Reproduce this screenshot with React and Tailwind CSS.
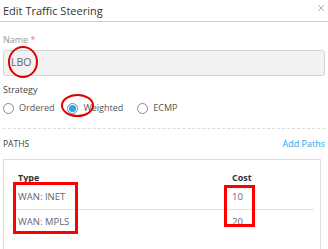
import React from 'react';

const rows = [
    { type: 'WAN: INET', cost: 10 },
    { type: 'WAN: MPLS', cost: 20 },
];

const Radio = ({ checked, label }) => (
    <label className="flex items-center gap-[5px]">
        {checked ? (
            <span className="w-[11px] h-[11px] rounded-full border border-[#2ea3e6] flex items-center justify-center bg-white">
                <span className="w-[7px] h-[7px] rounded-full bg-[#2ea3e6]" />
            </span>
        ) : (
            <span className="w-[11px] h-[11px] rounded-full border border-[#8a8a8a] bg-white" />
        )}
        <span>{label}</span>
    </label>
);

const App = () => {
    return (
        <div className="relative w-[328px] h-[249px] overflow-hidden bg-white text-[#444]" style={{ fontFamily: '"Open Sans", sans-serif' }}>
            <div className="h-[22px] flex items-center justify-between border-b border-[#cfcfcf] pl-[3px] pr-[3px]">
                <span className="text-[11px] text-[#333] leading-none">Edit Traffic Steering</span>
                <svg width="8" height="8" viewBox="0 0 8 8" className="mb-[6px]">
                    <path d="M1 1L7 7M7 1L1 7" stroke="#999" strokeWidth="0.8" />
                </svg>
            </div>

            <div className="px-[3px]">
                <div className="mt-[12px] text-[9px] leading-[12px] text-[#9a9a9a]">
                    Name <span className="text-[#ef7b7b]">*</span>
                </div>
                <div className="mt-[4px] h-[26px] w-[322px] rounded-[3px] border border-[#d4d4d4] bg-[#f2f2f2] flex items-center pl-[7px] text-[10.5px] text-[#666]">
                    LBO
                </div>

                <div className="mt-[8px] text-[9px] leading-[12px] text-[#444]">Strategy</div>
                <div className="mt-[6px] flex items-center text-[9px] leading-[12px] text-[#555]">
                    <div><Radio label="Ordered" /></div>
                    <div className="ml-[13px]"><Radio checked label="Weighted" /></div>
                    <div className="ml-[14px]"><Radio label="ECMP" /></div>
                </div>

                <div className="mt-[14px] border-t border-dashed border-[#dcdcdc]" />

                <div className="mt-[9px] flex items-center justify-between leading-[12px]">
                    <span className="text-[8.5px] text-[#444]">PATHS</span>
                    <span className="text-[9px] text-[#2ea3e6]">Add Paths</span>
                </div>

                <div className="mt-[9px] w-[318px] h-[120px] border border-[#dedede] pt-[11px] pl-[9px] pr-[6px]">
                    <div className="grid grid-cols-[214px_1fr] text-[9.5px]">
                        <div className="pl-[5px] leading-[14px] font-bold text-[#333] text-[9px]">Type</div>
                        <div className="pl-[5px] leading-[14px] font-bold text-[#333] text-[9px]">Cost</div>
                        {rows.map((row, i) => (
                            <React.Fragment key={i}>
                                <div className={`pl-[5px] h-[25px] flex items-center text-[#5f6570] ${i === 0 ? 'border-b border-[#e3e3e3]' : ''}`}>{row.type}</div>
                                <div className={`pl-[5px] h-[25px] flex items-center text-[#5f6570] ${i === 0 ? 'border-b border-[#e3e3e3]' : ''}`}>{row.cost}</div>
                            </React.Fragment>
                        ))}
                    </div>
                </div>
            </div>

            {/* red annotation marks */}
            <div className="absolute left-[8px] top-[46px] w-[30px] h-[32px] rounded-[50%] border-2 border-[#e00000]" />
            <div className="absolute left-[61px] top-[94px] w-[33px] h-[23px] rounded-[50%] border-2 border-[#e00000]" />
            <div className="absolute left-[13px] top-[182px] w-[65px] h-[52px] border-[3px] border-[#ff0000]" />
            <div className="absolute left-[224px] top-[185px] w-[31px] h-[42px] border-[3px] border-[#ff0000]" />
        </div>
    );
};

export default App;
